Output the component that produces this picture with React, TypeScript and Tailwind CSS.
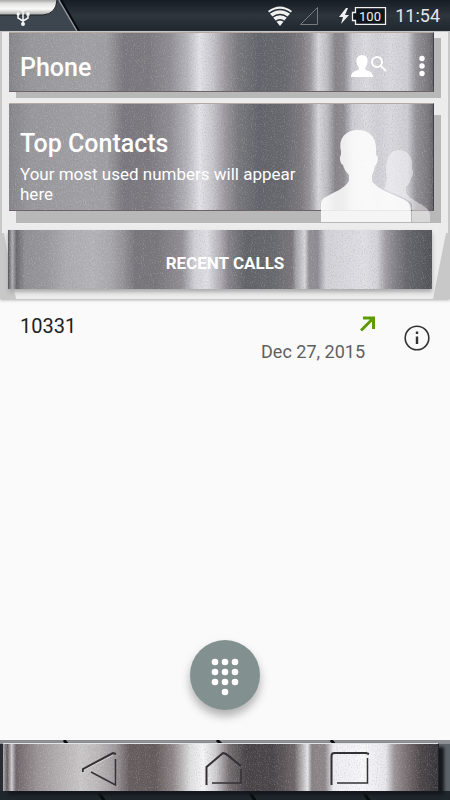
import type { ReactNode } from 'react';

const METAL = {
    card: 'bg-[linear-gradient(90deg,#858489_0%,#97969b_5%,#a09fa4_18%,#9e9da2_23%,#79777d_27%,#7b797f_33%,#8f8d93_38%,#b5b4ba_42%,#e2e2e8_45%,#c6c5cb_48%,#99979d_51%,#77777c_54%,#606369_59%,#66676d_65%,#7c797f_69%,#96949a_71%,#d6d6db_73%,#bcbcc1_75%,#858388_77%,#8d8b91_79%,#cacad0_81%,#d9d9df_84%,#cfcfd5_87%,#d8d8de_90%,#cbcbd1_94%,#939197_96%,#77757a_99%,#606066_100%)]',
    tab: 'bg-[linear-gradient(90deg,#505058_0%,#b0b0b4_1%,#68686d_2%,#8f8e92_4%,#98979c_9%,#acabb0_14%,#b3b2b7_20%,#a9a8ad_24%,#949297_27%,#77757b_30%,#77747a_35%,#908e94_41%,#d0d0d6_44%,#dedee4_47%,#b0aeb4_50%,#858389_52%,#606268_56%,#64666b_62%,#77757a_67%,#a5a4a9_68%,#d6d6db_70%,#908e94_71%,#8d8b91_73%,#d0d0d6_75%,#d8d8de_80%,#dedee4_84%,#d2d2d8_87%,#a09ea4_89%,#85838a_91%,#66666c_94%,#505258_100%)]',
    nav: 'bg-[linear-gradient(90deg,#b0aeb0_0%,#645c60_1%,#cfcdcf_2%,#6d6468_3%,#9b9497_8%,#b3afb1_13%,#c9c6c7_18%,#bbb7b9_22%,#9b9598_26%,#655c5e_29%,#62595b_35%,#8c8486_39%,#dededf_43%,#f5f5f8_46%,#cbc9cc_49%,#746d70_52%,#464245_56%,#484447_62%,#6d6568_67%,#e6e6e8_70%,#888184_71%,#8d8689_74%,#eeeef2_76%,#f7f7fa_83%,#e7e7eb_88%,#9a9396_90%,#746b6d_93%,#4c4648_96%,#353438_100%)]',
};

// brushed speckle, drawn once light and once dark
function Grain({ id }: { id: string }) {
    return (
        <svg className="pointer-events-none absolute inset-0 h-full w-full opacity-20" aria-hidden="true">
            <filter id={`${id}-light`} x="0" y="0" width="1" height="1">
                <feTurbulence type="fractalNoise" baseFrequency="0.9 0.6" numOctaves="2" seed="4" />
                <feColorMatrix values="0 0 0 0 1  0 0 0 0 1  0 0 0 0 1  3 0 0 0 -1.5" />
            </filter>
            <filter id={`${id}-dark`} x="0" y="0" width="1" height="1">
                <feTurbulence type="fractalNoise" baseFrequency="0.9 0.6" numOctaves="2" seed="11" />
                <feColorMatrix values="0 0 0 0 .2  0 0 0 0 .2  0 0 0 0 .2  3 0 0 0 -1.5" />
            </filter>
            <rect width="100%" height="100%" filter={`url(#${id}-light)`} />
            <rect width="100%" height="100%" filter={`url(#${id}-dark)`} />
        </svg>
    );
}

function UsbIcon() {
    return (
        <svg className="mt-0.5" width="14" height="20" viewBox="0 0 14 20" fill="none" stroke="#f4f4f4" strokeWidth="1.5" aria-label="USB">
            <path d="M7 3v13M7 14l-5-3V7M7 14l5-3V7" />
            <path d="M7 0l2.5 4h-5z" fill="#f4f4f4" stroke="none" />
            <circle cx="7" cy="17" r="2" fill="#f4f4f4" stroke="none" />
            <circle cx="2.2" cy="7" r="1.7" fill="#f4f4f4" stroke="none" />
            <path d="M10.4 5.4h3.2v3.2h-3.2z" fill="#f4f4f4" stroke="none" />
        </svg>
    );
}

function StatusBar() {
    return (
        <div className="relative flex h-8 items-center overflow-hidden border-b border-[#c9cbce] bg-linear-to-b from-[#171d24] via-[#2d353d] to-[#20272e] pr-[10px] pl-4 text-[#e6e6e6]">
            <svg className="absolute top-0 left-0" width="90" height="31" aria-hidden="true">
                <defs>
                    <linearGradient id="plate" x1="0" y1="0" x2="0" y2="1">
                        <stop offset="0" stopColor="#a8a8a6" />
                        <stop offset="0.25" stopColor="#e4e4e2" />
                        <stop offset="0.6" stopColor="#fafaf9" />
                        <stop offset="1" stopColor="#a3a3a0" />
                    </linearGradient>
                </defs>
                <path d="M0 0h59l18 31H0z" fill="#3d454e" />
                <path d="M59 0l18 31" stroke="#92979c" strokeWidth="1.5" />
                <path d="M61 0l18 31" stroke="#080b0f" strokeWidth="2" />
                <path d="M0 0h57q-1 14-14 15H0z" fill="url(#plate)" />
                <path d="M57 0q-1 14-14 15H0" fill="none" stroke="#1b2023" />
            </svg>
            <div className="relative flex w-full items-center">
                <UsbIcon />
                <svg className="ml-auto" width="26" height="20" viewBox="0 0 26 20" fill="#f0f0f0" aria-label="Wi-Fi">
                    <path d="M13 20L1 5q12-9 24 0z" />
                    <path d="M2 7.5q11-8 22 0M5 11.5q8-6 16 0M8.5 15.5q4.5-3.5 9 0" fill="none" stroke="#252c34" strokeWidth="1.3" />
                </svg>
                <svg className="ml-[6px]" width="20" height="20" fill="none" stroke="#777c81" aria-label="No signal">
                    <path d="M1.5 18.5h17v-17z" />
                </svg>
                <svg className="ml-5" width="48" height="18" viewBox="0 0 48 18" aria-label="Battery charging">
                    <path d="M7 1L0 10h4l-2 7 8-9H6l3-7z" fill="#f0f0f0" />
                    <path d="M16.5.5h30v17h-30v-4h-3v-8h3z" fill="#10161c" stroke="#f0f0f0" strokeWidth="1.3" />
                    <text x="31" y="14" fill="#f0f0f0" fontSize="13" fontFamily="Roboto, sans-serif" textAnchor="middle">100</text>
                </svg>
                <span className="ml-2 text-lg">11:54</span>
            </div>
        </div>
    );
}

function MetalCard({ id, className, children }: { id: string; className: string; children: ReactNode }) {
    return (
        <div className={`relative border-t border-r border-b border-t-[#b5a9a2] border-r-[#45444a] border-b-[#6d6265] ${METAL.card} ${className}`}>
            <Grain id={id} />
            {children}
        </div>
    );
}

function NavBar() {
    return (
        <nav className="relative h-[60px] overflow-hidden bg-linear-to-r from-[#262c32] via-[#4a4e52] to-[#5d6469] pt-[3px] pr-[11px] pl-[3px]">
            <svg className="absolute inset-0 h-full w-full" aria-hidden="true">
                <rect width="100%" height="4" fill="#8b8f93" />
                <rect y="51" width="100%" height="9" fill="#20272c" />
                <path d="M64 0l4 5M97 50l8 12M217 0l6 6M331 0l4 5M248 50l8 12M362 50l8 12" stroke="#080b0d" strokeWidth="3" />
            </svg>
            <div className={`relative flex h-12 items-center border-t border-r border-t-[#e3e3e3] border-r-[#222] shadow-[5px_4px_3px_#15191d] ${METAL.nav}`}>
                <Grain id="grain-nav" />
                <div className="relative flex w-full justify-between pt-1 pr-[68px] pl-[79px] text-[#343135]">
                    <button aria-label="Back">
                        <svg width="36" height="36" viewBox="0 0 36 36" fill="none" stroke="currentColor">
                            <path d="M1 20v-3L31 1l3 1" strokeWidth="2" />
                            <path d="M33.5 7v26L9 20" strokeWidth="1.5" />
                            <path d="M2 21v-3L31 3" stroke="#fff" strokeOpacity="0.4" />
                        </svg>
                    </button>
                    <button aria-label="Home">
                        <svg width="38" height="36" viewBox="0 0 38 36" fill="none" stroke="currentColor">
                            <path d="M1.5 33V15L18 1l3 1 15 12" strokeWidth="2" />
                            <path d="M36 17v14H7" strokeWidth="1.5" />
                        </svg>
                    </button>
                    <button aria-label="Recent apps">
                        <svg width="40" height="36" viewBox="0 0 40 36" fill="none" stroke="currentColor">
                            <path d="M1.5 33V4q0-3 3-3H36l3 1" strokeWidth="2" />
                            <path d="M37.5 6v25H7" strokeWidth="1.5" />
                        </svg>
                    </button>
                </div>
            </div>
        </nav>
    );
}

export default function App() {
    return (
        <div className="flex min-h-screen flex-col bg-[#fafafa] font-[Roboto,sans-serif]">
            <StatusBar />

            <header className="relative border-x-2 border-x-[#c8c8c8] bg-[#ececec] pr-[14px] pb-[10px] pl-[7px] shadow-[0_1px_3px_#aaa]">
                <svg className="absolute right-0 bottom-0" width="16" height="70" aria-hidden="true">
                    <path d="M14 4h2v66H1z" fill="#c8c8c8" />
                </svg>
                <svg className="absolute bottom-0 left-0" width="14" height="70" aria-hidden="true">
                    <path d="M0 4h2l12 66H0z" fill="#c8c8c8" />
                </svg>

                <MetalCard id="grain-title" className="flex h-[60px] items-center justify-between pt-3 pr-2 pl-[11px] shadow-[7px_6px_0_#b8b8b8]">
                    <h1 className="relative text-[25px] font-medium text-white">Phone</h1>
                    <div className="relative flex items-center gap-8 pb-1 text-white">
                        <button aria-label="Search contacts">
                            <svg width="36" height="22" viewBox="0 0 36 22" fill="currentColor">
                                <path d="M11 0c4 0 6 3 5.5 7-.3 3-1.5 4-2.5 6v1.5c3 1.5 8 2 8 7.500H0c0-5.500 5-6 8-7.500V13c-1-2-2.200-3-2.500-6C5 3 7 0 11 0z" />
                                <g fill="none" stroke="currentColor" strokeWidth="2">
                                    <circle cx="26" cy="7" r="5" />
                                    <path d="M29.5 10.5l5.5 5.5" />
                                </g>
                            </svg>
                        </button>
                        <button aria-label="More options">
                            <svg width="6" height="22" fill="currentColor">
                                <circle cx="3" cy="3.5" r="2.7" />
                                <circle cx="3" cy="11" r="2.7" />
                                <circle cx="3" cy="18.5" r="2.7" />
                            </svg>
                        </button>
                    </div>
                </MetalCard>

                <MetalCard id="grain-top" className="mt-[11px] h-[108px] pt-6 pr-[115px] pl-[11px] text-white shadow-[7px_12px_0_#b8b8b8]">
                    <svg className="absolute right-0.5 -bottom-3" width="110" height="94" viewBox="0 0 110 94" fill="#fff" aria-hidden="true">
                        <path fillOpacity="0.45" d="M78 22c8 0 13 6 13 14v6c2 0 1 7-1 8-1 5-3 7-5 9v6c5 9 24 12 24 22v7H91V76c-3-6-18-9-28-15l3-10c-2-8-2-29 12-29z" />
                        <path fillOpacity="0.85" d="M37 2c11 0 18 7 18 18v7c3 0 2 9-1 11-1 5-2 7-3 9v6c6 9 21 13 31 18 7 3 8 7 8 14v9H0V77c0-4 1-6 5-8 8-5 18-8 23-16v-6c-3-3-5-6-6-10-3-1-4-9-2-10v-4C17 9 26 2 37 2z" />
                    </svg>
                    <h2 className="relative text-[25px] leading-8 font-medium">Top Contacts</h2>
                    <p className="relative mt-1 text-[17px] leading-5">Your most used numbers will appear here</p>
                </MetalCard>

                <button className={`relative mt-[19px] -ml-px flex h-[59px] w-[calc(100%-1px)] items-center justify-center pl-[10px] shadow-[0_3px_4px_#aaa] ${METAL.tab}`}>
                    <Grain id="grain-tab" />
                    <span className="relative mt-2 text-[17px] font-bold text-white">RECENT CALLS</span>
                </button>
            </header>

            <main className="flex flex-1 flex-col">
                <div className="flex items-center pt-[13px] pr-5 pl-5">
                    <div className="flex-1 pr-7">
                        <div className="flex items-center justify-between">
                            <span className="text-xl leading-7 text-[#212121]">10331</span>
                            <svg className="mb-1" width="16" height="16" viewBox="0 0 16 16" fill="none" stroke="#5c9b00" strokeWidth="3" aria-label="Outgoing call">
                                <path d="M1 14.5L13 2.500M3 2h10.500v11" />
                            </svg>
                        </div>
                        <div className="pr-[11px] text-right text-lg leading-6 text-[#5f5f5f]">Dec 27, 2015</div>
                    </div>
                    <button aria-label="Call details">
                        <svg width="26" height="26" viewBox="0 0 26 26" fill="none" stroke="#333">
                            <circle cx="13" cy="13" r="11.8" strokeWidth="1.6" />
                            <path d="M13 6.5v2.500M13 11.5v7.500" strokeWidth="2.4" />
                        </svg>
                    </button>
                </div>

                <div className="mt-auto flex justify-center pb-[30px]">
                    <button aria-label="Dial pad" className="flex size-[70px] items-center justify-center rounded-full bg-[#82918f] shadow-[0_6px_10px_#0000004d]">
                        <svg className="mt-1" width="28" height="38" fill="#fff">
                            <circle cx="4" cy="4" r="3.3" />
                            <circle cx="14" cy="4" r="3.3" />
                            <circle cx="24" cy="4" r="3.3" />
                            <circle cx="4" cy="14" r="3.3" />
                            <circle cx="14" cy="14" r="3.3" />
                            <circle cx="24" cy="14" r="3.3" />
                            <circle cx="4" cy="24" r="3.3" />
                            <circle cx="14" cy="24" r="3.3" />
                            <circle cx="24" cy="24" r="3.3" />
                            <circle cx="14" cy="34" r="3.3" />
                        </svg>
                    </button>
                </div>
            </main>

            <NavBar />
        </div>
    );
}
